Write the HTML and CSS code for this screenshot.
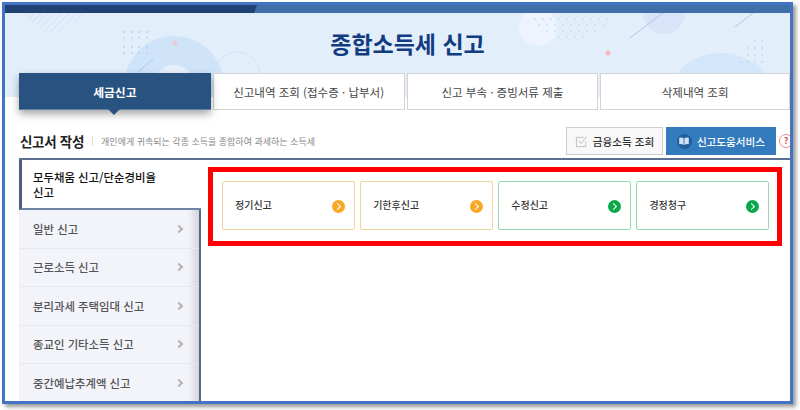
FILE: index.html
```html
<!DOCTYPE html>
<html lang="ko">
<head>
    <meta charset="UTF-8">
    <title>종합소득세 신고</title>
    <link rel="stylesheet" href="styles.css">
</head>
<body>
    <div class="frame">
        <div class="top-bar"><span class="top-bar-dark"></span></div>
        <div class="hero">
            <svg class="hero-art" width="785" height="84" viewBox="0 0 785 84">
                <defs>
                    <pattern id="hatch" width="5" height="5" patternUnits="userSpaceOnUse" patternTransform="rotate(45)">
                        <path d="M0 0V5" stroke="#cfdff2" stroke-width="1.500"/>
                    </pattern>
                </defs>
                <path d="M17 0H85L52 20H40z" fill="url(#hatch)"/>
                <circle cx="169" cy="73" r="50" fill="#cfe4f9"/>
                <circle cx="169" cy="73" r="21" fill="#e7f1fc"/>
                <circle cx="232" cy="62" r="23" fill="none" stroke="#d4e4f6"/>
                <path d="M133 59L148 46" stroke="#a9c6e6"/>
                <circle cx="170" cy="30" r="2.500" fill="#eec7d0"/>
                <g fill="#b7d4ee">
                    <circle cx="119" cy="19" r="1"/><circle cx="127" cy="19" r="1"/><circle cx="134" cy="19" r="1"/><circle cx="142" cy="19" r="1"/>
                    <circle cx="119" cy="25" r="1"/><circle cx="127" cy="25" r="1"/><circle cx="134" cy="25" r="1"/><circle cx="142" cy="25" r="1"/>
                    <circle cx="119" cy="34" r="1"/><circle cx="127" cy="34" r="1"/><circle cx="134" cy="34" r="1"/><circle cx="142" cy="34" r="1"/>
                    <circle cx="119" cy="40" r="1"/><circle cx="127" cy="40" r="1"/><circle cx="134" cy="40" r="1"/><circle cx="142" cy="40" r="1"/>
                </g>
                <circle cx="533" cy="14" r="19" fill="#edf4fd"/>
                <g fill="#d0dff1">
                    <circle cx="530" cy="6" r="1"/><circle cx="538" cy="6" r="1"/><circle cx="546" cy="6" r="1"/><circle cx="554" cy="6" r="1"/><circle cx="562" cy="6" r="1"/><circle cx="570" cy="6" r="1"/><circle cx="578" cy="6" r="1"/><circle cx="586" cy="6" r="1"/><circle cx="594" cy="6" r="1"/><circle cx="602" cy="6" r="1"/>
                    <circle cx="534" cy="12" r="1"/><circle cx="542" cy="12" r="1"/><circle cx="550" cy="12" r="1"/><circle cx="558" cy="12" r="1"/><circle cx="566" cy="12" r="1"/><circle cx="574" cy="12" r="1"/><circle cx="582" cy="12" r="1"/><circle cx="590" cy="12" r="1"/><circle cx="598" cy="12" r="1"/>
                    <circle cx="542" cy="18" r="1"/><circle cx="550" cy="18" r="1"/><circle cx="558" cy="18" r="1"/><circle cx="566" cy="18" r="1"/><circle cx="574" cy="18" r="1"/><circle cx="582" cy="18" r="1"/><circle cx="590" cy="18" r="1"/>
                    <circle cx="554" cy="24" r="1"/><circle cx="562" cy="24" r="1"/><circle cx="570" cy="24" r="1"/><circle cx="578" cy="24" r="1"/>
                </g>
                <circle cx="659" cy="0" r="21" fill="#d8e5f8"/>
                <path d="M625 25L658 0M730 14L748 0" stroke="#a9c6e6" fill="none"/>
                <circle cx="603" cy="40" r="2.500" fill="#f4b9bf"/>
                <circle cx="716" cy="98" r="48" fill="none" stroke="#d3e6fa" stroke-width="20"/>
                <g fill="#c5d9ee">
                    <circle cx="750" cy="28" r="1"/><circle cx="757" cy="28" r="1"/>
                    <circle cx="743" cy="35" r="1"/><circle cx="750" cy="35" r="1"/><circle cx="757" cy="35" r="1"/>
                    <circle cx="743" cy="42" r="1"/><circle cx="750" cy="42" r="1"/><circle cx="757" cy="42" r="1"/>
                    <circle cx="736" cy="49" r="1"/><circle cx="743" cy="49" r="1"/><circle cx="750" cy="49" r="1"/><circle cx="757" cy="49" r="1"/>
                </g>
            </svg>
            <h1 class="hero-title">종합소득세 신고</h1>
        </div>
        <div class="tabs">
            <div class="tab tab-active">세금신고</div>
            <div class="tab">신고내역 조회 (접수증 · 납부서)</div>
            <div class="tab">신고 부속 · 증빙서류 제출</div>
            <div class="tab tab-last">삭제내역 조회</div>
        </div>
        <div class="section-head">
            <h2 class="section-title">신고서 작성</h2>
            <span class="section-desc">개인에게 귀속되는 각종 소득을 종합하여 과세하는 소득세</span>
            <div class="section-actions">
                <div class="btn btn-light">
                    <svg width="13" height="13" viewBox="0 0 14 14" fill="none" stroke="#bdbdbd" stroke-width="1">
                        <path d="M11.500 7v5.500h-10v-10h8"/>
                        <path d="M4 6l2.500 3 6-7"/>
                    </svg>
                    금융소득 조회
                </div>
                <div class="btn btn-blue">
                    <span class="btn-icon">
                        <svg width="10" height="8" viewBox="0 0 12 10" fill="#cfe3f5">
                            <path d="M0 1q3-1 5.500 .5V10Q3 8.500 0 9zM12 1q-3-1-5.500 .5V10Q9 8.500 12 9z"/>
                        </svg>
                    </span>
                    신고도움서비스
                </div>
                <span class="help">?</span>
            </div>
        </div>
        <div class="content">
            <ul class="side-menu">
                <li class="side-item side-active">모두채움 신고/단순경비율<br>신고</li>
                <li class="side-item">일반 신고<span class="chev"></span></li>
                <li class="side-item">근로소득 신고<span class="chev"></span></li>
                <li class="side-item">분리과세 주택임대 신고<span class="chev"></span></li>
                <li class="side-item">종교인 기타소득 신고<span class="chev"></span></li>
                <li class="side-item">중간예납추계액 신고<span class="chev"></span></li>
            </ul>
            <div class="main">
                <div class="highlight">
                    <div class="card card-orange">정기신고<span class="go"></span></div>
                    <div class="card card-orange">기한후신고<span class="go"></span></div>
                    <div class="card card-green">수정신고<span class="go"></span></div>
                    <div class="card card-green">경정청구<span class="go"></span></div>
                </div>
            </div>
        </div>
    </div>
</body>
</html>
```
FILE: styles.css
```css
* {
    box-sizing: border-box;
}

body {
    margin: 0;
    width: 800px;
    height: 410px;
    overflow: hidden;
    background-color: #fff;
    font-family: "Noto Sans CJK KR", "Noto Sans", sans-serif;
    color: #333;
}

ul {
    list-style: none;
    margin: 0;
    padding: 0;
}

.frame {
    margin: 2px 0 0 2px;
    width: 791px;
    height: 402px;
    border: 3px solid #4472c4;
    box-shadow: 3px 3px 4px rgba(0, 0, 0, 0.4);
    overflow: hidden;
    background-color: #fff;
}

.top-bar {
    height: 8px;
    background-color: #3f6ea8;
}

.top-bar-dark {
    display: block;
    width: 252px;
    height: 8px;
    background-color: #1f4273;
    clip-path: polygon(0 0, 100% 0, 98.800% 100%, 0 100%);
}

.hero {
    position: relative;
    height: 84px;
    background-color: #e3eefb;
}

.hero-art {
    position: absolute;
    left: 0;
    top: 0;
}

.hero-title {
    position: relative;
    margin: 0;
    padding: 13px 0 0 20px;
    text-align: center;
    font-size: 23px;
    line-height: 34px;
    font-weight: 700;
    color: #123c80;
}

.tabs {
    position: relative;
    display: flex;
    gap: 2px;
    margin: -24px 0 0 14px;
}

.tab {
    width: 192px;
    height: 37px;
    display: flex;
    align-items: center;
    justify-content: center;
    background-color: #fff;
    border: 1px solid #d4d4d4;
    font-size: 11.500px;
    color: #444;
}

.tab-active {
    position: relative;
    background-color: #28527f;
    border: none;
    border-bottom: 1px solid #5f7fa6;
    font-size: 11.800px;
    color: #fff;
    font-weight: 700;
    box-shadow: 0 4px 8px rgba(0, 0, 0, 0.35);
}

.tab-active::after {
    content: "";
    position: absolute;
    left: 89px;
    bottom: -6px;
    border: 6px solid transparent;
    border-top-color: #28527f;
    border-bottom: none;
}

.tab-last {
    width: 190px;
}

.section-head {
    display: flex;
    align-items: center;
    height: 48px;
    padding: 14px 0 0 15px;
}

.section-title {
    margin: 0;
    font-size: 13.500px;
    letter-spacing: -0.300px;
    font-weight: 700;
    color: #222;
}

.section-desc {
    margin-left: 8px;
    padding-left: 9px;
    font-size: 9px;
    color: #888;
    background: linear-gradient(#ddd, #ddd) left center / 1px 10px no-repeat;
}

.section-actions {
    display: flex;
    align-items: center;
    gap: 3px;
    margin-left: auto;
    margin-right: -3px;
}

.btn {
    height: 28px;
    display: flex;
    align-items: center;
    justify-content: center;
    gap: 5px;
    font-size: 10.600px;
    font-weight: 500;
}

.btn-light {
    width: 97px;
    background-color: #f8f8f8;
    border: 1px solid #cfcfcf;
    color: #333;
}

.btn-blue {
    width: 110px;
    background-color: #337bbd;
    color: #fff;
}

.btn-icon {
    width: 15px;
    height: 15px;
    display: flex;
    align-items: center;
    justify-content: center;
    border-radius: 50%;
    background-color: #1e5f9c;
}

.help {
    flex: none;
    width: 14px;
    height: 14px;
    border: 1.500px solid #f08a8a;
    border-radius: 50%;
    font-size: 9px;
    line-height: 11px;
    font-weight: 700;
    text-align: center;
    color: #d9534f;
}

.content {
    display: flex;
    margin-left: 14px;
    border-top: 2px solid #5b7093;
}

.side-menu {
    flex: none;
    width: 182px;
    border-right: 2px solid #4f6a90;
}

.side-item {
    position: relative;
    height: 38.500px;
    padding-left: 14px;
    display: flex;
    align-items: center;
    background-color: #f2f4fa;
    border-bottom: 1px solid #e6e8ef;
    font-size: 11.400px;
    font-weight: 500;
    color: #555;
    box-shadow: inset -14px 0 10px -10px rgba(0, 0, 0, 0.16);
}

.side-active {
    display: block;
    height: 50px;
    margin-right: -2px;
    padding: 10px 0 0 11px;
    background-color: #fff;
    border-left: 3px solid #4a5f82;
    border-bottom: 2px solid #6f84a4;
    line-height: 15px;
    color: #111;
    box-shadow: none;
}

.chev {
    position: absolute;
    right: 17px;
    top: 50%;
    width: 6px;
    height: 6px;
    margin-top: -3px;
    border-top: 2px solid #b5b5b5;
    border-right: 2px solid #b5b5b5;
    transform: rotate(45deg);
}

.main {
    flex: 1;
    padding: 7px 8px 0 7px;
}

.highlight {
    display: flex;
    gap: 5.500px;
    height: 79px;
    padding: 9px 8px 11px 9px;
    border: 5px solid #f00;
}

.card {
    position: relative;
    flex: 1;
    display: flex;
    align-items: center;
    padding: 0 0 2px 12px;
    background-color: #fff;
    border: 1px solid;
    border-radius: 2px;
    font-size: 10px;
    font-weight: 500;
    color: #333;
}

.card-orange {
    border-color: #f0d49a;
}

.card-green {
    border-color: #94dcb0;
}

.go {
    position: absolute;
    right: 9px;
    top: 18px;
    width: 13px;
    height: 13px;
    border-radius: 50%;
}

.card-orange .go {
    background-color: #f9a825;
}

.card-green .go {
    background-color: #0ba84a;
}

.go::after {
    content: "";
    position: absolute;
    left: 3px;
    top: 4px;
    width: 4px;
    height: 4px;
    border-top: 1.500px solid #fff;
    border-right: 1.500px solid #fff;
    transform: rotate(45deg);
}
```
